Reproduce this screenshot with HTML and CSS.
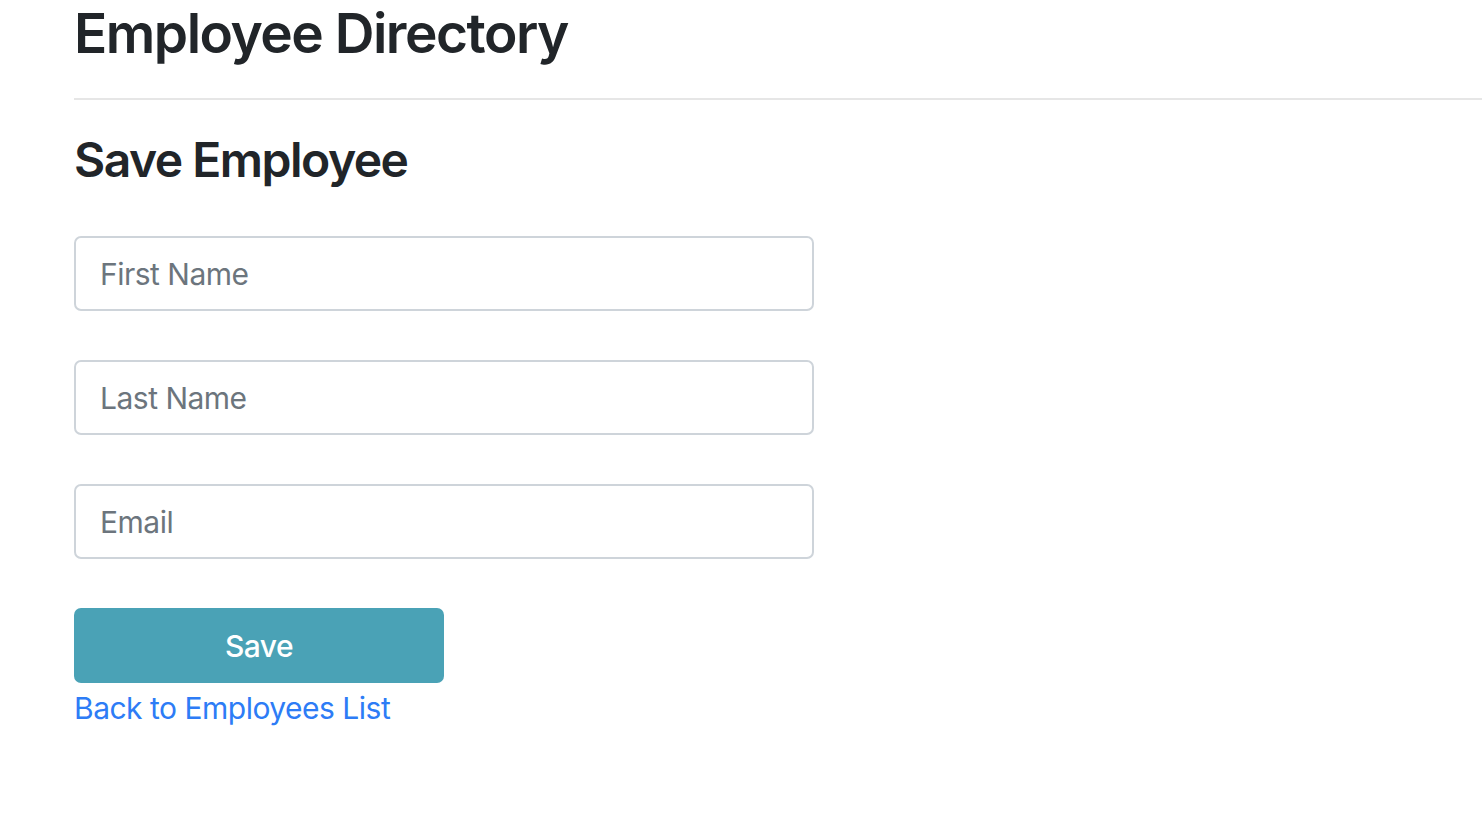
FILE: index.html
```html
<!DOCTYPE html>
<html lang="en">
<head>
<meta charset="utf-8">
<title>Employee Directory</title>
<link rel="stylesheet" href="styles.css">
</head>
<body>
<div class="page">
  <h1 class="title">Employee Directory</h1>
  <hr class="rule">
  <h2 class="subtitle">Save Employee</h2>
  <form class="form">
    <input class="field" type="text" placeholder="First Name">
    <input class="field" type="text" placeholder="Last Name">
    <input class="field" type="email" placeholder="Email">
    <button class="save" type="button">Save</button>
  </form>
  <a class="back" href="#">Back to Employees List</a>
</div>
</body>
</html>
```

FILE: styles.css
```css
html, body {
  margin: 0;
  padding: 0;
  background: #fff;
}
body {
  font-family: Inter, "Noto Sans", "Liberation Sans", sans-serif;
  color: #212529;
}
.page {
  padding-left: 74px;
  display: flex;
  flex-direction: column;
  align-items: flex-start;
}
.title {
  margin: 0;
  font-size: 55px;
  line-height: 66px;
  font-weight: 600;
  letter-spacing: -1.5px;
}
.rule {
  align-self: stretch;
  margin: 32px 0 0 0;
  border: 0;
  height: 2px;
  background: #e6e6e6;
}
.subtitle {
  margin: 31px 0 0 0;
  font-size: 48px;
  line-height: 58px;
  font-weight: 600;
  letter-spacing: -1.5px;
}
.form {
  margin-top: 47px;
  display: flex;
  flex-direction: column;
  gap: 49px;
}
.field {
  box-sizing: border-box;
  width: 740px;
  height: 75px;
  border: 2px solid #ced4da;
  border-radius: 7px;
  padding: 0 24px;
  font-family: inherit;
  font-size: 30px;
  letter-spacing: -0.5px;
  color: #495057;
  outline: none;
  background: #fff;
}
.field::placeholder {
  color: #6c757d;
  opacity: 1;
}
.save {
  box-sizing: border-box;
  width: 370px;
  height: 75px;
  border: 0;
  border-radius: 7px;
  background: #4aa2b6;
  color: #fff;
  font-family: inherit;
  font-size: 30px;
  font-weight: 500;
  letter-spacing: -0.6px;
  padding: 0;
}
.back {
  margin-top: 3px;
  font-size: 30px;
  line-height: 45px;
  letter-spacing: -0.5px;
  color: #2d7cf6;
  text-decoration: none;
}
```
